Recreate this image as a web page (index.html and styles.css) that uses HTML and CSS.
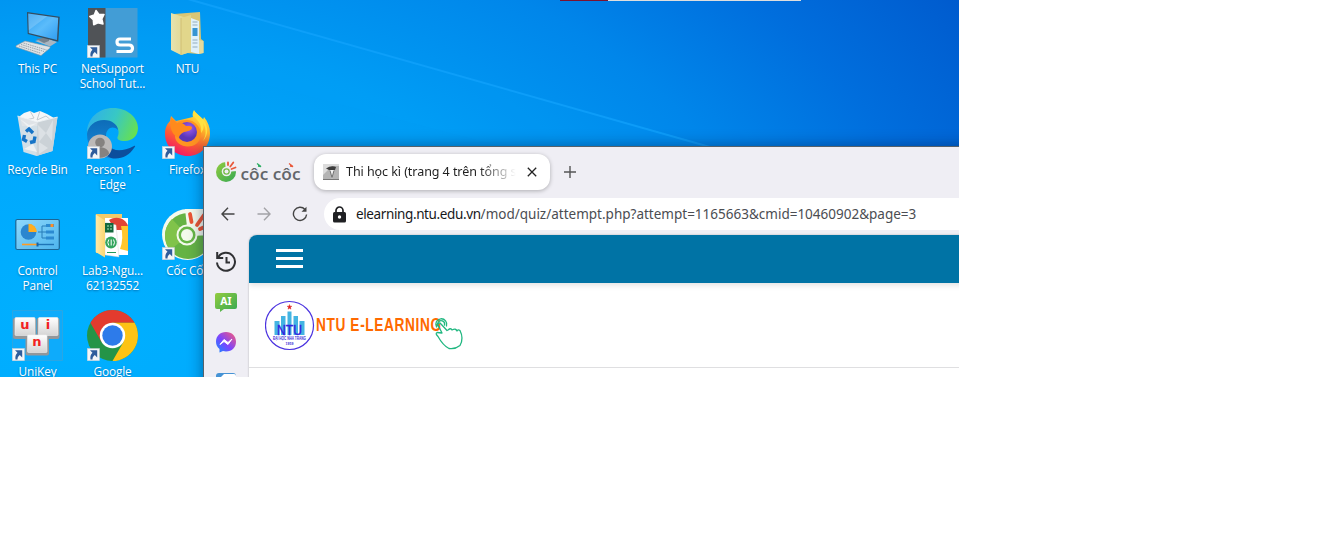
FILE: index.html
```html
<!DOCTYPE html>
<html lang="vi">
<head>
<meta charset="utf-8">
<title>Desktop</title>
<link rel="stylesheet" href="styles.css">
</head>
<body>
<svg class="defs" width="0" height="0">
  <defs>
    <g id="shortcut">
      <rect x="12.3" y="39.5" width="12.2" height="12.2" fill="#f4f6f8" stroke="#c3cbd4" stroke-width=".5"/>
      <path d="M15 41.3h7.2v7.2l-2.4-2.4c-1.6 1.2-2.3 2.5-2.3 4.4h-2c-.5-3.200.3-5.400 2-6.800z" fill="#2f5d9c"/>
    </g>
    <linearGradient id="screen" x1="0" y1="0" x2="1" y2="1"><stop offset="0" stop-color="#2a9df0"/><stop offset=".5" stop-color="#5bbcfb"/><stop offset="1" stop-color="#2f9df2"/></linearGradient>
    <linearGradient id="fold" x1="0" y1="0" x2="1" y2="0"><stop offset="0" stop-color="#ffeaa8"/><stop offset="1" stop-color="#fbd672"/></linearGradient>
    <linearGradient id="edgeTop" x1="0" y1=".3" x2="1" y2=".6"><stop offset="0" stop-color="#2fb0ea"/><stop offset=".5" stop-color="#38c8c4"/><stop offset="1" stop-color="#66e052"/></linearGradient>
    <linearGradient id="edgeLeft" x1="0" y1="0" x2="0" y2="1"><stop offset="0" stop-color="#0d6cb8"/><stop offset="1" stop-color="#1a8bdc"/></linearGradient>
    <linearGradient id="fox" x1=".8" y1="0" x2=".3" y2="1"><stop offset="0" stop-color="#fff14a"/><stop offset=".35" stop-color="#ffb02a"/><stop offset=".65" stop-color="#ff5f31"/><stop offset="1" stop-color="#f0126b"/></linearGradient>
    <radialGradient id="globe" cx=".6" cy=".3"><stop offset="0" stop-color="#a05cf0"/><stop offset="1" stop-color="#5a36b8"/></radialGradient>
    <linearGradient id="green" x1="0" y1="0" x2="1" y2="1"><stop offset="0" stop-color="#93cc3f"/><stop offset="1" stop-color="#34a853"/></linearGradient>
    <linearGradient id="panel" x1="0" y1="0" x2="1" y2="1"><stop offset="0" stop-color="#8fd8fb"/><stop offset="1" stop-color="#4db5ee"/></linearGradient>
    <linearGradient id="key" x1="0" y1="0" x2="0" y2="1"><stop offset="0" stop-color="#fff"/><stop offset="1" stop-color="#d4d4d4"/></linearGradient>
    <linearGradient id="msg" x1="0" y1="1" x2="1" y2="0"><stop offset="0" stop-color="#118dff"/><stop offset=".45" stop-color="#7a45ff"/><stop offset="1" stop-color="#ff5c72"/></linearGradient>
  </defs>
</svg>

<main class="desktop">
  <svg class="ray" width="959" height="377" viewBox="0 0 959 377">
    <path d="M170-6L710 146H500L170 60z" fill="#00a8ff" opacity=".1"/>
    <path d="M170-6L710 147" stroke="#16a6ff" stroke-width="2" opacity=".6"/>
  </svg>

  <section class="icons">
    <div class="item">
      <svg viewBox="0 0 75 55">
        <path d="M35 35l11-3 11 4-7 4.500z" fill="#a9b6c1"/>
        <path d="M36 33l13-2v4l-5 2z" fill="#75838f"/>
        <path d="M27 6l32.700 4.700-1.400 25L27.700 28z" fill="#354d60"/>
        <path d="M28.200 7.500l30 4.200-1.200 22.300-28.200-7z" fill="url(#screen)"/>
        <path d="M28.200 7.500l19 2.700-18.500 14z" fill="#fff" opacity=".18"/>
        <path d="M25 35l-9 4.800v1.200l25 8.600 9-7.600v-1.300z" fill="#dfe3e6" stroke="#8b979f" stroke-width=".6"/>
        <path d="M23.500 37l23 7M21 38.500l23 7M19 40l22 7.300" stroke="#8e9aa3" stroke-width=".9" stroke-dasharray="1.500 .8"/>
      </svg>
      <span class="label">This PC</span>
    </div>
    <div class="item">
      <svg viewBox="0 0 75 55">
        <path d="M13 2h49.500v49.500H13z" fill="#429dd6"/>
        <path d="M13 2h17.500v49.500H13z" fill="#505357"/>
        <path d="M21 4.500l2.800 3.800 5.200.2-2.200 4.500 1.200 5-5-1.200-4.300 2-.4-5-3.500-3.300 4.500-1.600z" fill="#fff" stroke="#fff" stroke-width="1.500" stroke-linejoin="round"/>
        <path d="M56 33H45q-3 0-3 3t3 3h9q3.500 0 3.500 3.300T54 45.500H41.500" fill="none" stroke="#fff" stroke-width="3.200"/>
        <use href="#shortcut"/>
      </svg>
      <span class="label">NetSupport<br>School Tut...</span>
    </div>
    <div class="item">
      <svg viewBox="0 0 75 55">
        <path d="M24 8l26-2 1 27 2.500 2V47l-6 1-20-2z" fill="#f2ca66"/>
        <path d="M41 12l8 3v33l-8-2z" fill="#fafafa"/>
        <path d="M42.500 16h5M42.500 19h5M42.500 34h5M42.500 37h5M42.500 41h5" stroke="#a3adb6"/>
        <path d="M42.500 22h5v8h-5z" fill="#3d93cd"/>
        <path d="M21 7l19 6v33l-9 3-10-5z" fill="url(#fold)"/>
        <path d="M31 12l10-3v37l-10 3z" fill="#fcdc7e"/>
        <path d="M31 12v37" stroke="#dfb85a" stroke-width=".7"/>
        <path d="M49 34l4.500 1v12l-4.500 1z" fill="#ffe194"/>
      </svg>
      <span class="label">NTU</span>
    </div>

    <div class="item">
      <svg viewBox="0 0 75 55">
        <path d="M20 9l4-3 6-2 4 2 6-2 7 3 7 4-2 8H22z" fill="#f6f7f8"/>
        <path d="M30 4l4 7-8 2M40 4l-3 9 9-4 6 5" stroke="#c5cbd0" fill="none"/>
        <path d="M17.500 9l20 6 20-5-5 34-16 5-13-4z" fill="#dde2e6" opacity=".95"/>
        <path d="M37.500 15l20-5-5 34-16 5z" fill="#cbd2d7"/>
        <path d="M38 18l8 8-7 9zM53 13l-7 13 6 8zM39 35l9 6-9 6z" fill="#dce1e5"/>
        <path d="M20 12l9 6 8-2-8 5zM24 42l9-5 4 8z" fill="#eef1f3"/>
        <path d="M17.500 9l20 6 20-5" stroke="#eef3f6" stroke-width=".8" fill="none"/>
        <g fill="none" stroke="#1674c7" stroke-width="3.400"><path d="M26 24.500l3-2.500 4 4"/><path d="M24.500 28l-1 4.500 3.500 2"/><path d="M30 35.500l4-1 1-5"/></g>
      </svg>
      <span class="label">Recycle Bin</span>
    </div>
    <div class="item">
      <svg viewBox="0 0 75 55">
        <path d="M12 26C12 11 24 1 38 1c15 0 25 10 25 20 0 8-6 13-13 13-6 0-9-2-7-5 2-6-1-12-9-14-10-2-19 3-22 11z" fill="url(#edgeTop)"/>
        <path d="M12 27c1-8 8-14 17-14 8 0 14 5 14 10-5-5-12-2-12 6 0 10 8 16 18 15-4 6-10 8-16 7C20 50 12 41 12 27z" fill="url(#edgeLeft)"/>
        <path d="M31 28c-2 12 9 21 28 11 2-1 1 1 0 2-5 8-14 12-23 10-8-3-12-15-5-23z" fill="#0c4e9c"/>
        <circle cx="25" cy="39.500" r="12" fill="#bcb9b8"/><circle cx="25" cy="35.500" r="4.800" fill="#858280"/><path d="M16 47c0-9 18-9 18 0-5 5-13 5-18 0z" fill="#858280"/>
        <use href="#shortcut"/>
      </svg>
      <span class="label">Person 1 -<br>Edge</span>
    </div>
    <div class="item">
      <svg viewBox="0 0 75 55">
        <path d="M43 10c-1-3 0-5 1-7 2 4 6 6 9 10l1-3c4 5 6 10 6 16 0 13-9 23-22 23S15 39 15 27c0-6 2-10 5-13l1-5 5 5z" fill="url(#fox)"/>
        <path d="M28 15c6-3 15-3 20 4 6 8 2 18-6 20-9 2-17-3-17-10z" fill="#ff9421"/>
        <circle cx="37" cy="25" r="10" fill="url(#globe)"/>
        <path d="M21 10l6 6c5-1 7 1 9 3 4 0 6 0 6 2-1 3-4 3-8 4-3 2-5 3-5 6-7-3-10-10-8-21z" fill="#ff8a1c"/>
        <path d="M43 9c6 5 9 9 8 17 3-3 3-7 2-10 4 7 3 13 0 18 6-7 5-14 1-21l-10-9z" fill="#ffe141"/>
        <use href="#shortcut"/>
      </svg>
      <span class="label">Firefox</span>
    </div>

    <div class="item">
      <svg viewBox="0 0 75 55">
        <rect x="15.800" y="11.500" width="43.500" height="30" rx="1.500" fill="url(#panel)" stroke="#1b6595" stroke-width="1.200"/>
        <circle cx="28.500" cy="24" r="7.800" fill="#2b86cf"/><path d="M28.500 24v-8.300a8.300 8.300 0 0 1 8.300 8.300z" fill="#ffad1f"/>
        <path d="M38 24h4v-6h4M42 24h4M42 24v6h4" fill="none" stroke="#267cb9"/>
        <path d="M46 17.500h8M46 24h8M46 30h8" stroke="#2b8ad1" stroke-width="3.200"/><path d="M50.500 17.500h3" stroke="#ff8e28" stroke-width="3"/>
        <path d="M22 36.500h15" stroke="#ff9c22" stroke-width="1.600"/><path d="M37 36.500h17" stroke="#1e74b8" stroke-width="1.400"/><path d="M37.500 34.500v4" stroke="#1763a5" stroke-width="2"/>
      </svg>
      <span class="label">Control<br>Panel</span>
    </div>
    <div class="item">
      <svg viewBox="0 0 75 55">
        <path d="M21 6h26v39H21z" fill="#f2ca68"/>
        <path d="M30 10h23v37H30z" fill="#fff"/>
        <path d="M34 12c8-5 17-1 19 6v4H40z" fill="#e14436"/><path d="M46 18h7v25l-8-2q4-10 1-23z" fill="#ffc62d"/>
        <path d="M30 14l11 3 3 32-14-2z" fill="#fff" stroke="#ccc" stroke-width=".4"/>
        <path d="M30 15h8.500v9.500H30z" fill="#14683d"/><path d="M32 18h2M35 18h2M32 21h2M35 21h2" stroke="#a7e5ba"/>
        <ellipse cx="36" cy="34.500" rx="5.800" ry="6" fill="#34a55d"/><path d="M33.800 31.500q-2 3 0 6M38.500 31.500q2 3 0 6M36.200 31.500v6" stroke="#fff" fill="none"/>
        <path d="M32 44.500h9" stroke="#22995a"/>
        <path d="M20.700 6.500l9.300 6v37l-9.300-5.500z" fill="url(#fold)"/>
      </svg>
      <span class="label">Lab3-Ngu...<br>62132552</span>
    </div>
    <div class="item">
      <svg viewBox="0 0 75 55">
        <circle cx="37.500" cy="26.500" r="25.500" fill="#f4faed"/>
        <circle cx="38" cy="28" r="23" fill="#65b344"/>
        <path d="M38 28L35 1h31v26z" fill="#f4faed"/>
        <path d="M22 11a23 23 0 0 0-2 31l18-14z" fill="#80c34a"/>
        <circle cx="37" cy="27" r="10.500" fill="#f4faed"/><circle cx="37" cy="27" r="8.500" fill="#68b747"/><circle cx="37" cy="27" r="6" fill="#f4faed"/>
        <path d="M41.500 14L40 6M47 17l7-10M50 21l9-4" stroke="#eb5634" stroke-width="3.800" stroke-linecap="round"/>
        <use href="#shortcut"/>
      </svg>
      <span class="label">Cốc Cốc</span>
    </div>

    <div class="item">
      <svg viewBox="0 0 75 55">
        <path d="M12.500 1.500h50v50h-50z" fill="#0eabfb" stroke="#38a4d8" stroke-width=".7"/>
        <g fill="#92979b"><rect x="13" y="9" width="23" height="21" rx="2"/><rect x="36.500" y="9" width="23" height="21" rx="2"/><rect x="25.500" y="25.500" width="23.500" height="21" rx="2"/></g>
        <g fill="url(#key)" stroke="#eee" stroke-width=".6"><rect x="15" y="8.500" width="20" height="18" rx="1"/><rect x="38.500" y="8.500" width="19.500" height="18" rx="1"/><rect x="27.500" y="26" width="19.500" height="17.500" rx="1"/></g>
        <g class="keycap"><text x="25" y="20">u</text><text x="48" y="20">i</text><text x="37" y="37">n</text></g>
        <use href="#shortcut"/>
      </svg>
      <span class="label">UniKey</span>
    </div>
    <div class="item">
      <svg viewBox="0 0 75 55">
        <circle cx="37.500" cy="26.500" r="25.500" fill="#249447"/>
        <path d="M15.400 13.800A25.500 25.500 0 0 1 59.600 13.800H37.500L26.500 32.900z" fill="#e33b2e"/>
        <path d="M59.600 13.800A25.500 25.500 0 0 1 37.500 52L48.500 32.900 37.500 13.800z" fill="#fdc315"/>
        <circle cx="37.500" cy="26.500" r="12.700" fill="#fff"/><circle cx="37.500" cy="26.500" r="10.200" fill="#2d7bea"/>
        <use href="#shortcut"/>
      </svg>
      <span class="label">Google</span>
    </div>
  </section>

  <div class="toolbar-peek"></div>

  <section class="window">
    <header class="tabs">
      <svg class="brand" width="86" height="26" viewBox="0 0 86 26">
        <circle cx="10" cy="13" r="10" fill="url(#green)"/>
        <path d="M10 13L9 2h12v10z" fill="#efeef4"/>
        <circle cx="10.500" cy="12.500" r="4.800" fill="#efeef4"/><circle cx="10.500" cy="12.500" r="3.300" fill="#72bc45"/><circle cx="10.500" cy="12.500" r="2" fill="#efeef4"/>
        <path d="M12 6V3.500M14.300 7.500l3-4M15.500 10l4-1.500" stroke="#e9583a" stroke-width="1.800" stroke-linecap="round"/>
        <text class="brand-text" x="24.500" y="20.500" textLength="60" lengthAdjust="spacingAndGlyphs">côc côc</text>
        <path d="M41 4.500l4 3-3-.5" stroke="#2cae62" fill="none" stroke-width="1.300"/><path d="M73 4.500l4 3-3-.5" stroke="#e9583a" fill="none" stroke-width="1.300"/>
      </svg>
      <div class="tab">
        <svg width="16" height="16" viewBox="0 0 16 16"><path d="M0 0h16v16H0z" fill="#dcdcdc"/><path d="M0 16v-5l9-9h7v14z" fill="#b4b4b4"/><path d="M3 4.500q5-3.500 10-1.500l-1 3H6z" fill="#3d3d3d"/><path d="M7 6h4l-2 9z" fill="#f2f2f2"/><path d="M7 6.500l2 7 2-7" stroke="#555" stroke-width=".8" fill="none"/><path d="M0 15.500h16" stroke="#777"/></svg>
        <span class="tab-title">Thi học kì (trang 4 trên tổng s</span>
        <svg width="10" height="10" viewBox="0 0 10 10"><path d="M.8.8l8.400 8.400M9.200.8L.8 9.200" stroke="#222" stroke-width="1.300"/></svg>
      </div>
      <svg class="plus" width="12" height="12" viewBox="0 0 12 12"><path d="M6 0v12M0 6h12" stroke="#555" stroke-width="1.400"/></svg>
    </header>
    <div class="nav">
      <svg width="14" height="14" viewBox="0 0 14 14"><path d="M13.500 7H1M7 .8L1 7l6 6.200" fill="none" stroke="#444" stroke-width="1.400"/></svg>
      <svg width="14" height="14" viewBox="0 0 14 14"><path d="M.5 7H13M7 .8L13 7l-6 6.200" fill="none" stroke="#a3a3a7" stroke-width="1.400"/></svg>
      <svg width="16" height="16" viewBox="0 0 16 16"><path d="M13 3.500A6.600 6.600 0 1 0 14.600 8.500" fill="none" stroke="#444" stroke-width="1.400"/><path d="M14.500.8v5h-5z" fill="#444"/></svg>
      <div class="address">
        <svg width="13" height="17" viewBox="0 0 13 17"><path d="M3 6V4.500a3.500 3.500 0 0 1 7 0V6" fill="none" stroke="#1f2023" stroke-width="1.700"/><rect y="6" width="13" height="10.500" rx="1.500" fill="#1f2023"/><circle cx="6.500" cy="11" r="1.700" fill="#fff"/></svg>
        <span class="url"><b>elearning.ntu.edu.vn</b>/mod/quiz/attempt.php?attempt=1165663&amp;cmid=10460902&amp;page=3</span>
      </div>
    </div>
    <div class="body">
      <aside class="side">
        <svg width="22" height="22" viewBox="0 0 22 22"><path d="M3.200 6.200A9 9 0 1 1 2 11.500" fill="none" stroke="#303134" stroke-width="2"/><path d="M2.200 1v6h6" fill="none" stroke="#303134" stroke-width="2"/><path d="M11.500 6v5.500h3.500" fill="none" stroke="#303134" stroke-width="2"/></svg>
        <svg width="22" height="20" viewBox="0 0 22 20"><path d="M2 0h18q2 0 2 2v12q0 2-2 2H9l-4 3V16H2q-2 0-2-2V2q0-2 2-2z" fill="url(#green)"/><text class="ai" x="11" y="11.800">AI</text></svg>
        <svg width="20" height="21" viewBox="0 0 20 21"><path d="M10 0c6 0 10 4 10 9.700s-4 9.700-10 9.700l-3-.4-3.500 1.500V17Q0 14 0 9.700C0 4 4 0 10 0z" fill="url(#msg)"/><path d="M4 12.500l4-5 4 3 4-3.500-4 5.500-4-3z" fill="#fff" stroke="#fff" stroke-linejoin="round"/></svg>
        <svg width="20" height="20" viewBox="0 0 20 20"><rect width="20" height="20" rx="3" fill="#4693d5"/><path d="M3 20V6l5-5h10q2 0 2 2v17z" fill="#fff"/></svg>
      </aside>
      <article class="page">
        <div class="topbar"><i></i><i></i><i></i></div>
        <div class="site-head">
          <svg width="200" height="52" viewBox="0 0 200 52">
            <circle cx="24.500" cy="25.500" r="24" fill="#fff" stroke="#4a32df" stroke-width="1.200"/>
            <path d="M24.500 4.500l.6 1.700h1.800l-1.400 1.200.5 1.800-1.500-1-1.500 1 .5-1.800-1.400-1.200h1.800z" fill="#df2020" stroke="#df2020" stroke-width=".4"/>
            <path d="M9.500 21h5v14h-5zM16 16h4.500v19H16zM22.500 11.500h4V35h-4zM28.500 16H33v19h-4.500zM34.500 21h5v14h-5z" fill="#43b4e2"/>
            <text class="seal" x="24.500" y="34.500" textLength="25" lengthAdjust="spacingAndGlyphs">NTU</text>
            <text class="seal-small" x="24.500" y="40" textLength="33" lengthAdjust="spacingAndGlyphs">ĐẠI HỌC NHA TRANG</text>
            <text class="seal-year" x="24.500" y="44.500">1959</text>
            <text class="site-name" transform="translate(51 30.500) scale(.74 1)" textLength="169">NTU E-LEARNING</text>
            <g fill="none" stroke="#20b780" stroke-width="1.300" stroke-linejoin="round" stroke-linecap="round">
              <path d="M176 24q-1.500-2-3.500 0l4.500 9-5-.5q-2 1 1 4 5 9 11 12 6 1 11-3 4-7 0-15-2-1.500-3 .5-1-3-5-1-1-2.500-4 0l-1 .5z"/>
              <path d="M171.500 27a5.500 5.500 0 1 1 10-1M174 27a3.500 3.500 0 1 1 5.500-2"/>
            </g>
          </svg>
        </div>
      </article>
    </div>
  </section>
</main>
</body>
</html>
```
FILE: styles.css
```css
body { margin: 0; background: #fff; font-family: "Noto Sans", "Open Sans", sans-serif; }
.defs { position: absolute; }

.desktop {
  position: relative;
  width: 959px;
  height: 377px;
  overflow: hidden;
  background: radial-gradient(ellipse 1050px 620px at 70px 320px, #00b0ff 0, #00a9fd 25%, #009cf4 46%, #0086ea 67%, #006edd 83%, #005acd 100%);
}
.ray { position: absolute; inset: 0; }

.icons {
  display: grid;
  grid-template-columns: repeat(3, 75px);
  grid-auto-rows: 101px;
  padding-top: 6px;
}
.item { display: flex; flex-direction: column; align-items: center; }
.item svg { width: 75px; height: 55px; flex: none; }
.label {
  color: #fff;
  font-family: "Open Sans", "Noto Sans", sans-serif;
  font-size: 11.8px;
  letter-spacing: -.1px;
  line-height: 15px;
  text-align: center;
  white-space: nowrap;
  text-shadow: 0 1px 2px rgba(0, 40, 90, .45);
}
.keycap { font: bold 13px "DejaVu Sans", sans-serif; fill: #f22222; text-anchor: middle; }

.toolbar-peek {
  position: absolute;
  top: 0;
  left: 560px;
  width: 241px;
  height: 1px;
  background: linear-gradient(90deg, #7b1230 48px, #dedede 48px);
}

.window {
  position: absolute;
  top: 146px;
  left: 203px;
  width: 780px;
  height: 260px;
  border: solid #56616a;
  border-width: 1px 0 0 1px;
  background: #efeef4;
  box-shadow: 0 0 14px rgba(0, 20, 60, .45);
}
.tabs { display: flex; align-items: center; height: 51px; padding: 0 0 2px 12px; box-sizing: border-box; }
.brand { flex: none; margin-right: 12px; }
.brand-text { font: 600 16.500px "Open Sans", "Noto Sans", sans-serif; fill: #62656a; }
.tab {
  display: flex;
  align-items: center;
  width: 236px;
  height: 36px;
  box-sizing: border-box;
  padding: 0 13px 0 9px;
  border-radius: 12px;
  background: #fff;
  box-shadow: 0 1px 4px rgba(0, 0, 0, .28);
}
.tab svg { flex: none; }
.tab-title {
  flex: 1;
  margin: 0 11px 0 7px;
  overflow: hidden;
  color: #1f1f1f;
  font-size: 12.5px;
  letter-spacing: -.06px;
  line-height: 20px;
  white-space: nowrap;
  -webkit-mask-image: linear-gradient(90deg, #000 78%, transparent);
  mask-image: linear-gradient(90deg, #000 78%, transparent);
}
.plus { margin-left: 14px; }

.nav { display: flex; align-items: center; height: 32px; padding-left: 17px; }
.nav > svg { flex: none; margin-right: 22px; }
.nav > svg:nth-child(2) { margin-right: 21px; }
.nav > svg:nth-child(3) { margin-right: 16px; }
.address {
  display: flex;
  flex: 1;
  align-items: center;
  gap: 10px;
  height: 32px;
  padding-left: 9px;
  border-radius: 16px 0 0 16px;
  background: #fff;
}
.url { color: #4b4d52; font-size: 13.5px; line-height: 20px; white-space: nowrap; }
.url b { color: #17181a; font-weight: normal; letter-spacing: -.38px; }

.body { display: flex; height: 172px; padding-top: 5px; }
.side { display: flex; flex: none; flex-direction: column; align-items: center; width: 45px; padding: 16px 2px 0 0; box-sizing: border-box; }
.side svg { flex: none; margin-bottom: 20px; }
.side svg:nth-child(2) { margin-bottom: 19px; }
.ai { font: bold 10.500px "Noto Sans", sans-serif; fill: #fff; text-anchor: middle; }
.page { flex: 1; overflow: hidden; border-radius: 8px 0 0; background: #fff; box-shadow: 0 0 2px rgba(0, 0, 0, .3); }
.topbar {
  display: flex;
  flex-direction: column;
  gap: 5px;
  height: 48px;
  padding: 14px 0 0 27px;
  box-sizing: border-box;
  background: #0073a5;
  box-shadow: 0 2px 6px rgba(0, 0, 0, .13);
}
.topbar i { width: 27px; height: 3px; background: #fff; }
.site-head { height: 85px; padding: 17px 0 0 16px; box-sizing: border-box; border-bottom: 1px solid #dfdfe1; }
.seal { font: 14px "Liberation Sans", sans-serif; fill: #3420df; stroke: #3420df; stroke-width: .4; text-anchor: middle; }
.seal-small { font: bold 4.500px "Liberation Sans", sans-serif; fill: #4230d8; text-anchor: middle; }
.seal-year { font: bold 3.500px "Liberation Sans", sans-serif; fill: #4230d8; text-anchor: middle; }
.site-name { font: bold 18.500px "Liberation Sans", sans-serif; fill: #ff6900; }
```
